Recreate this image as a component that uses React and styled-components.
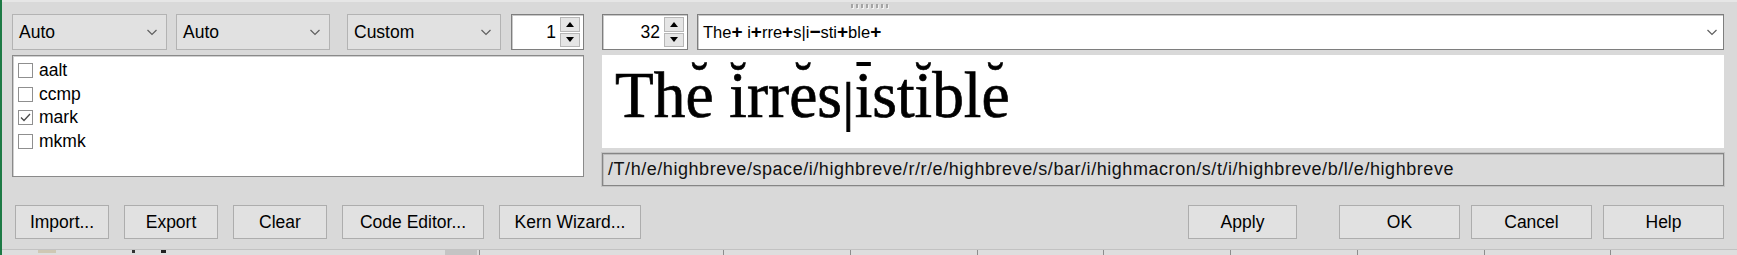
import React from 'react'
import styled, { createGlobalStyle } from 'styled-components'

const GlobalStyle = createGlobalStyle`
  html, body {
    margin: 0;
    padding: 0;
    background: #d9d9d9;
    overflow: hidden;
  }
  body {
    font-family: "Liberation Sans", Arial, sans-serif;
    font-size: 17.5px;
    color: #000;
  }
`

const Window = styled.div`
  width: 1737px;
  height: 255px;
  box-sizing: border-box;
  border-left: 2px solid #1d7a45;
  background: #d9d9d9;
  display: flex;
  flex-direction: column;
  overflow: hidden;
`

const TopStrip = styled.div`
  height: 14px;
  box-sizing: border-box;
  border-top: 2px solid #e6e6e6;
  display: flex;
  justify-content: center;
  padding-top: 2px;
`

const Grip = styled.div`
  display: flex;
  gap: 3px;
`

const GripDot = styled.span`
  width: 2px;
  height: 4px;
  background: #a4a4a4;
  box-shadow: 1px 1px 0 #f2f2f2;
`

const Main = styled.div`
  display: grid;
  grid-template-columns: 572px 1122px;
  column-gap: 18px;
  padding: 0 13px 0 10px;
  height: 172px;
`

const Column = styled.div`
  display: flex;
  flex-direction: column;
  gap: 5px;
`

const Row = styled.div`
  display: flex;
  height: 36px;
`

const Combo = styled.div`
  width: ${p => p.$w}px;
  margin-right: ${p => p.$gap || 0}px;
  box-sizing: border-box;
  height: 36px;
  display: flex;
  align-items: center;
  justify-content: space-between;
  padding: 0 9px 0 6px;
  background: #e1e1e1;
  border: 1px solid #b3b3b3;
`

const EditCombo = styled(Combo)`
  flex: 1;
  background: #fff;
  border: 1px solid #7e7e7e;
  box-shadow: inset 1px 1px 0 #c9c9c9;
  padding: 0 5px 0 5px;
  font-size: 16.5px;
`

const Spin = styled.div`
  width: ${p => p.$w}px;
  margin-right: ${p => p.$gap || 0}px;
  box-sizing: border-box;
  height: 36px;
  display: flex;
  align-items: center;
  justify-content: flex-end;
  gap: 4px;
  padding-right: 3px;
  background: #fff;
  border: 1px solid #7e7e7e;
  box-shadow: inset 1px 1px 0 #c9c9c9;
`

const SpinButtons = styled.div`
  display: flex;
  flex-direction: column;
  width: 20px;
  height: 30px;
  gap: 1px;
`

const SpinBtn = styled.div`
  flex: 1;
  display: flex;
  align-items: center;
  justify-content: center;
  background: #e5e5e5;
  border: 1px solid #b7b7b7;
`

const ListBox = styled.div`
  height: 122px;
  box-sizing: border-box;
  background: #fff;
  border: 1px solid #8a8a8a;
  box-shadow: inset 1px 1px 0 #d0d0d0;
  padding: 3px 5px;
  display: flex;
  flex-direction: column;
`

const ListItem = styled.label`
  display: flex;
  align-items: center;
  gap: 6px;
  height: 23.5px;
`

const Check = styled.span`
  width: 15px;
  height: 15px;
  box-sizing: border-box;
  border: 1px solid #8f8f8f;
  background: #fff;
  display: flex;
  align-items: center;
  justify-content: center;
`

const Preview = styled.div`
  height: 93px;
  box-sizing: border-box;
  background: #fff;
  padding: 7px 0 0 13px;
  font-family: "Liberation Serif", "Times New Roman", serif;
  font-size: 66px;
  line-height: 66px;
  white-space: nowrap;
`

const PreviewText = styled.span`
  display: inline-block;
  transform: scaleX(0.96);
  transform-origin: left center;
  -webkit-text-stroke: 0.7px #000;
`

const Accent = styled.span`
  position: relative;
  &::after {
    content: "${p => p.$mark}";
    position: absolute;
    left: 50%;
    top: -3px;
    transform: translateX(-50%);
    font-size: 54px;
    line-height: 1;
  }
`

const Macron = styled.span`
  position: relative;
  &::after {
    content: "";
    position: absolute;
    left: 50%;
    top: 4px;
    width: 15px;
    height: 4px;
    transform: translateX(-50%);
    background: #000;
  }
`

const Bar = styled.span`
  display: inline-block;
  transform: scaleY(0.82);
  transform-origin: center 70px;
`

const PathField = styled.div`
  height: 33px;
  box-sizing: border-box;
  display: flex;
  align-items: center;
  padding-left: 5px;
  background: #dadada;
  border: 1px solid #858585;
  box-shadow: 0 0 0 1px #c4c4c4, inset 1px 1px 0 #bdbdbd;
  font-size: 18px;
  letter-spacing: 0.55px;
  color: #111;
  white-space: nowrap;
`

const FieldText = styled.span`
  white-space: nowrap;
`

const Plus = styled.span`
  font-weight: 700;
  font-size: 19px;
  line-height: 1;
`

const ButtonBar = styled.div`
  display: flex;
  align-items: center;
  margin-top: 19px;
  padding: 0 13px 0 13px;
  height: 34px;
`

const Group = styled.div`
  display: flex;
  gap: ${p => p.$gap}px;
  margin-left: ${p => (p.$end ? 'auto' : '0')};
`

const Button = styled.div`
  width: ${p => p.$w}px;
  margin-right: ${p => p.$after || 0}px;
  height: 34px;
  box-sizing: border-box;
  background: #e1e1e1;
  border: 1px solid #adadad;
  display: flex;
  align-items: center;
  justify-content: center;
`

const BottomStrip = styled.div`
  margin-top: auto;
  height: 5px;
  border-top: 1px solid #c2c2c2;
  background: #dedede;
  display: flex;
`

const StripLeft = styled.div`
  width: 723px;
  display: flex;
  align-items: flex-start;
`

const StripMark = styled.span`
  margin-left: ${p => p.$x}px;
  width: ${p => p.$w}px;
  height: ${p => p.$h || 3}px;
  background: ${p => p.$c};
`

const StripCol = styled.div`
  width: 126px;
  border-left: 1px solid #8d8d8d;
`

const Chevron = ({ w = 10 }) => (
  <svg width={w} height="7" viewBox="0 0 10 7">
    <polyline points="0.5,1 5,5.5 9.5,1" fill="none" stroke="#5f5f5f" strokeWidth="1.2" />
  </svg>
)

const Tri = ({ up }) => (
  <svg width="8" height="5" viewBox="0 0 8 5">
    <polygon points={up ? '0,5 8,5 4,0' : '0,0 8,0 4,5'} fill="#000" />
  </svg>
)

const SpinBox = ({ value, w, gap }) => (
  <Spin $w={w} $gap={gap}>
    <span>{value}</span>
    <SpinButtons>
      <SpinBtn><Tri up /></SpinBtn>
      <SpinBtn><Tri /></SpinBtn>
    </SpinButtons>
  </Spin>
)

const features = [
  { name: 'aalt', on: false },
  { name: 'ccmp', on: false },
  { name: 'mark', on: true },
  { name: 'mkmk', on: false },
]

export default function App() {
  return (
    <Window>
      <GlobalStyle />
      <TopStrip>
        <Grip>
          {Array.from({ length: 8 }).map((_, i) => <GripDot key={i} />)}
        </Grip>
      </TopStrip>
      <Main>
        <Column>
          <Row>
            <Combo $w={155} $gap={9}>Auto<Chevron /></Combo>
            <Combo $w={154} $gap={17}>Auto<Chevron /></Combo>
            <Combo $w={154} $gap={10}>Custom<Chevron /></Combo>
            <SpinBox value="1" w={73} />
          </Row>
          <ListBox>
            {features.map(f => (
              <ListItem key={f.name}>
                <Check>
                  {f.on && (
                    <svg width="11" height="9" viewBox="0 0 11 9">
                      <polyline points="1,4.5 4,7.5 10,1" fill="none" stroke="#4a4a4a" strokeWidth="1.3" />
                    </svg>
                  )}
                </Check>
                {f.name}
              </ListItem>
            ))}
          </ListBox>
        </Column>
        <Column>
          <Row>
            <SpinBox value="32" w={86} gap={9} />
            <EditCombo>
              <FieldText>
                The<Plus>+</Plus> i<Plus>+</Plus>rre<Plus>+</Plus>s|i<Plus>−</Plus>sti<Plus>+</Plus>ble<Plus>+</Plus>
              </FieldText>
              <Chevron w={12} />
            </EditCombo>
          </Row>
          <Preview>
            <PreviewText>
              Th<Accent $mark="˘">e</Accent> <Accent $mark="˘">i</Accent>rr<Accent $mark="˘">e</Accent>s<Bar>|</Bar><Macron>i</Macron>st<Accent $mark="˘">i</Accent>bl<Accent $mark="˘">e</Accent>
            </PreviewText>
          </Preview>
          <PathField>
            /T/h/e/highbreve/space/i/highbreve/r/r/e/highbreve/s/bar/i/highmacron/s/t/i/highbreve/b/l/e/highbreve
          </PathField>
        </Column>
      </Main>
      <ButtonBar>
        <Group $gap={15}>
          <Button $w={94}>Import...</Button>
          <Button $w={94}>Export</Button>
          <Button $w={94}>Clear</Button>
          <Button $w={142}>Code Editor...</Button>
          <Button $w={142}>Kern Wizard...</Button>
        </Group>
        <Group $gap={11} $end>
          <Button $w={109} $after={31}>Apply</Button>
          <Button $w={121}>OK</Button>
          <Button $w={121}>Cancel</Button>
          <Button $w={121}>Help</Button>
        </Group>
      </ButtonBar>
      <BottomStrip>
        <StripLeft>
          <StripMark $x={36} $w={18} $c="#cfc8b4" />
          <StripMark $x={76} $w={3} $c="#333" />
          <StripMark $x={26} $w={5} $c="#222" />
          <StripMark $x={279} $w={32} $c="#c4c4c4" $h={5} />
          <StripMark $x={2} $w={1} $c="#8d8d8d" $h={5} />
        </StripLeft>
        {Array.from({ length: 8 }).map((_, i) => <StripCol key={i} />)}
      </BottomStrip>
    </Window>
  )
}
